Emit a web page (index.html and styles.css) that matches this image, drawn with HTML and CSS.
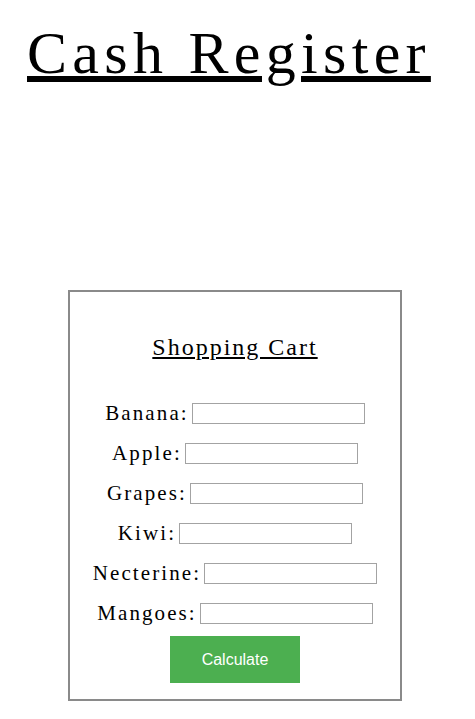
FILE: index.html
```html
<!DOCTYPE html>
<html>
<head>
<meta charset="utf-8">
<link rel="stylesheet" href="styles.css">
</head>
<body>
<h1 class="title">Cash Register</h1>
<div class="cart">
  <h2 class="cart-title">Shopping Cart</h2>
  <div class="row"><label class="lbl">Banana:</label><input class="field" type="text"></div>
  <div class="row"><label class="lbl">Apple:</label><input class="field" type="text"></div>
  <div class="row"><label class="lbl">Grapes:</label><input class="field" type="text"></div>
  <div class="row"><label class="lbl">Kiwi:</label><input class="field" type="text"></div>
  <div class="row"><label class="lbl">Necterine:</label><input class="field" type="text"></div>
  <div class="row"><label class="lbl">Mangoes:</label><input class="field" type="text"></div>
  <div class="actions"><button class="btn" type="button">Calculate</button></div>
</div>
</body>
</html>
```

FILE: styles.css
```css
html, body {
  margin: 0;
  padding: 0;
  background: #fff;
}
body {
  font-family: "Liberation Serif", "Times New Roman", serif;
  color: #000;
}
.title {
  margin: 0;
  padding: 18px 0 0 27px;
  font-size: 60px;
  line-height: 70px;
  font-weight: normal;
  letter-spacing: 5.3px;
  text-decoration: underline;
}
.cart {
  box-sizing: border-box;
  width: 334px;
  margin: 202px 0 0 68px;
  border: 2px solid #8a8a8a;
  padding: 0 0 16px;
}
.cart-title {
  margin: 41px 0 32px;
  font-size: 24px;
  line-height: 28px;
  font-weight: normal;
  text-align: center;
  letter-spacing: 2px;
  text-decoration: underline;
}
.row {
  display: flex;
  justify-content: center;
  align-items: center;
  gap: 3px;
  height: 40px;
}
.lbl {
  font-size: 21px;
  line-height: 24px;
  letter-spacing: 2.1px;
}
.field {
  box-sizing: border-box;
  width: 173px;
  height: 21px;
  margin: 0;
  padding: 1px 2px;
  border: 1px solid #a3a3a3;
  background: #fff;
}
.actions {
  display: flex;
  justify-content: center;
  padding-top: 3px;
}
.btn {
  width: 130px;
  height: 47px;
  margin: 0;
  border: none;
  background: #4caf50;
  color: #fff;
  font-family: "Liberation Sans", Arial, sans-serif;
  font-size: 16px;
}
```
